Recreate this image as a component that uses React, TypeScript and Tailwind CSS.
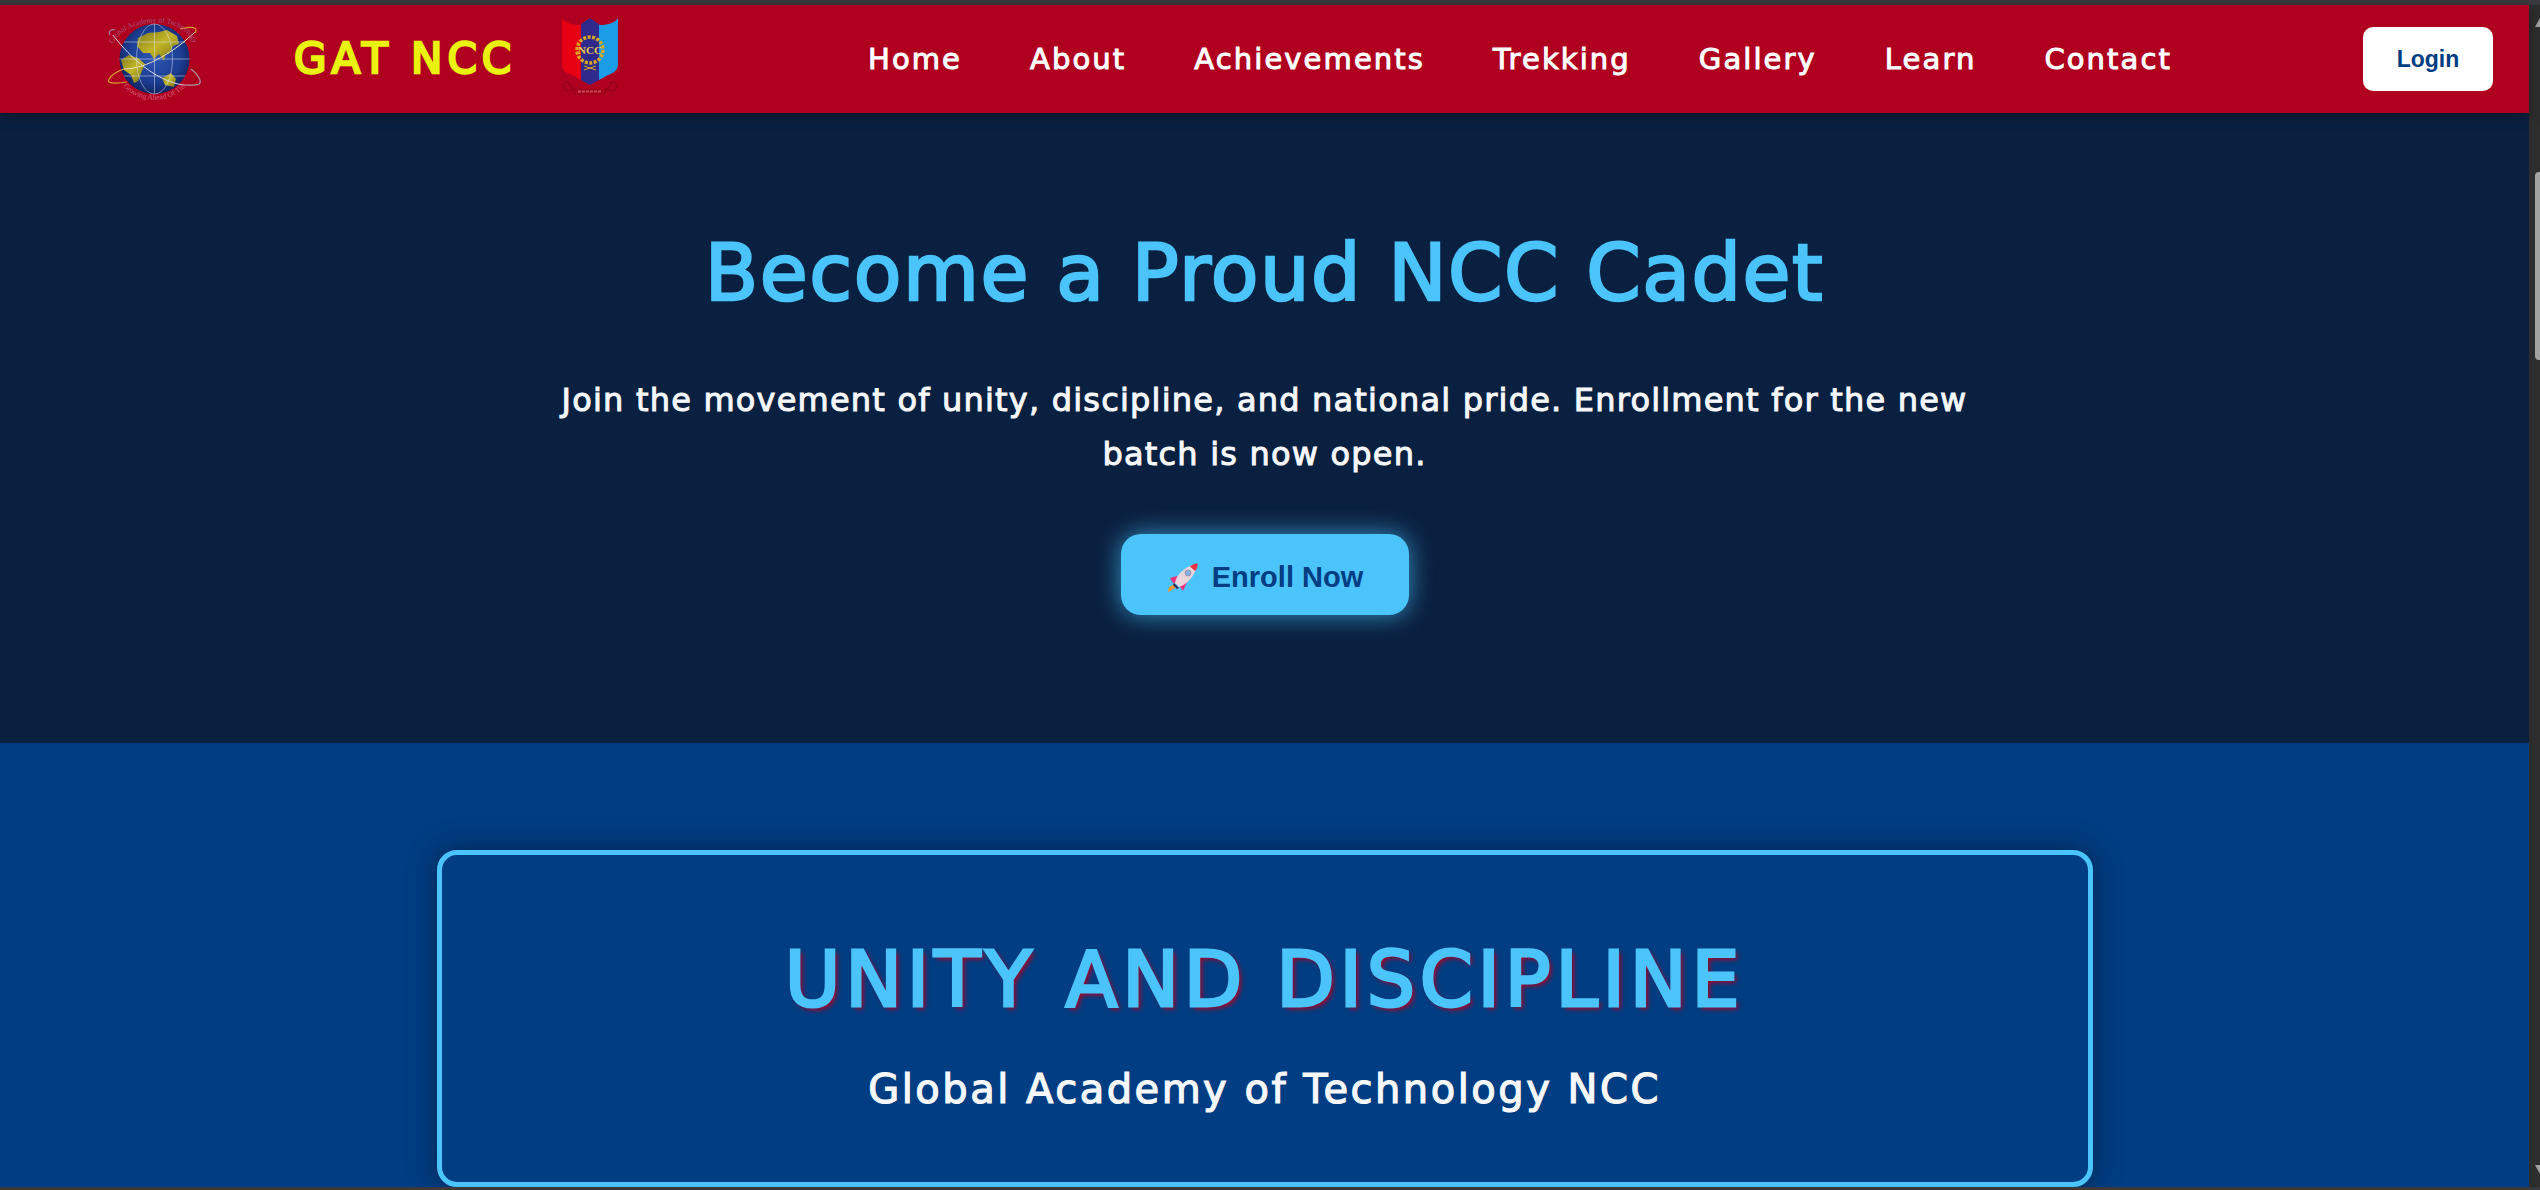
const NAV_LINKS = ["Home", "About", "Achievements", "Trekking", "Gallery", "Learn", "Contact"];

function GlobeLogo() {
  return (
    <svg viewBox="0 0 94 92" className="h-[92px] w-[94px] shrink-0" aria-hidden>
      <defs>
        <radialGradient id="sea" cx="50%" cy="45%" r="55%">
          <stop offset="0%" stopColor="#2c58b4" />
          <stop offset="70%" stopColor="#1c3c92" />
          <stop offset="100%" stopColor="#10245e" />
        </radialGradient>
        <linearGradient id="land" x1="0" y1="0" x2="1" y2="1">
          <stop offset="0%" stopColor="#7d7a1c" />
          <stop offset="50%" stopColor="#c4b526" />
          <stop offset="100%" stopColor="#6f6c1a" />
        </linearGradient>
        <path id="arcTop" d="M6 31 C16 8 70 -2 86 29" />
        <path id="arcBottom" d="M15 71 C28 92 66 92 80 71" />
      </defs>
      <circle cx="47.5" cy="46" r="35" fill="url(#sea)" />
      <path
        d="M31 25 L41 20 L52 19 L60 17 L70 23 L72 31 L66 33 L62 41 L59 40 L57 48 L52 41 L47 46 L43 40 L36 40 L30 33 Z"
        fill="url(#land)"
      />
      <path d="M14 47 L22 42 L31 45 L38 51 L35 58 L31 68 L27 70 L24 62 L17 57 Z" fill="url(#land)" />
      <path d="M55 65 L64 60 L69 66 L67 74 L58 72 Z" fill="url(#land)" />
      <g fill="none" stroke="#dfe6f5" strokeWidth="0.7" opacity="0.7">
        <ellipse cx="47.5" cy="46" rx="18" ry="35" />
        <path d="M47.5 11 V81 M12.5 46 H82.5 M17 29 H78 M17 63 H78" />
      </g>
      <path d="M17 56 C40 56 68 38 88 19" fill="none" stroke="#e8e2c0" strokeWidth="1" />
      <path d="M6 22 C24 46 50 68 76 72" fill="none" stroke="#d8d8e8" strokeWidth="1" />
      <path d="M3 22 C1 18 4 16 8 17" fill="none" stroke="#9a7fa0" strokeWidth="1.2" />
      <path d="M73 16 C84 13 92 14 88 20" fill="none" stroke="#d9a030" strokeWidth="1.2" />
      <path d="M17 56 C5 60 0 67 2 69 C6 71 14 70 20 69" fill="none" stroke="#d9a030" strokeWidth="1.2" />
      <path d="M84 56 C92 62 95 69 92 71 C88 73 82 72 76 72" fill="none" stroke="#a897a8" strokeWidth="1.2" />
      <text fill="#a2587e" fontSize="7.5" fontFamily="'Liberation Serif', serif">
        <textPath href="#arcTop">Global Academy of Technology</textPath>
      </text>
      <text fill="#d9607c" fontSize="7.5" fontFamily="'Liberation Serif', serif">
        <textPath href="#arcBottom" startOffset="3%">Growing Ahead Of Time</textPath>
      </text>
    </svg>
  );
}

function NccLogo() {
  return (
    <svg viewBox="0 0 56 82" className="ml-[46px] h-[82px] w-[56px] shrink-0" aria-hidden>
      <defs>
        <clipPath id="shield">
          <path d="M0 0 C4 6 12 7 18 7 L28 0 L38 7 C44 7 52 6 56 0 V46 C56 52 52 55 46 57 L28 67 L10 57 C4 55 0 52 0 46 Z" />
        </clipPath>
      </defs>
      <g clipPath="url(#shield)">
        <rect x="0" y="0" width="19" height="70" fill="#e60012" />
        <rect x="19" y="0" width="18" height="70" fill="#2f2a8c" />
        <rect x="37" y="0" width="19" height="70" fill="#1a9de6" />
      </g>
      <circle cx="28" cy="32" r="13" fill="none" stroke="#d9a820" strokeWidth="3.5" strokeDasharray="3 1.5" />
      <text x="28" y="36" textAnchor="middle" fill="#e8c84a" fontSize="11" fontWeight="700" fontFamily="'Liberation Serif', serif">
        NCC
      </text>
      <path d="M22 48 L34 52 M34 48 L22 52" stroke="#d9a820" strokeWidth="1" />
      <g fill="none" stroke="#8f0016" strokeWidth="1.2">
        <path d="M10 72 L6 73 C1 72 0 66 3 64 C6 63 9 66 8 69" />
        <path d="M46 72 L50 73 C55 72 56 66 53 64 C50 63 47 66 48 69" />
        <path d="M10 70 L14 76 H42 L46 70 L42 72 H14 Z" />
      </g>
      <path d="M16 73.5 H40" stroke="#c9485a" strokeWidth="2" strokeDasharray="3 1" />
    </svg>
  );
}

function RocketEmoji() {
  return (
    <svg viewBox="0 0 30 30" className="h-[30px] w-[30px] shrink-0" aria-hidden>
      <path d="M2 15 L9 13 L13 19 L5 20 Z" fill="#f0307a" />
      <path d="M19 19 L13 13 L10 21 L15 28 Z" fill="#f0307a" />
      <path d="M7 25 C4 27 2 28 0 29 C0 26 1 24 3 23 C5 21 8 23 7 25 Z" fill="#f59332" />
      <path d="M7 20 C8 12 17 4 25 2 L28 5 C27 13 18 22 11 24 Z" fill="#ead5dc" />
      <path d="M22 3.5 C25 1 28 0 29.5 0.5 C30 2 29 6 27 8 Z" fill="#f0303f" />
      <circle cx="20" cy="10" r="3" fill="#7fb2ea" stroke="#a88fa8" strokeWidth="1" />
      <path d="M6 20 L11 25 L9 26 L5 22 Z" fill="#3a2a50" />
    </svg>
  );
}

function Navbar() {
  return (
    <header className="relative z-10 flex h-[108px] shrink-0 items-center bg-[#b00020] pl-[107px] pr-[36px] shadow-[0_4px_12px_rgba(0,0,0,0.35)]">
      <GlobeLogo />
      <span className="ml-[93px] w-[222px] shrink-0 whitespace-nowrap text-[42px] leading-none tracking-[5px] text-[#eaf20f] [-webkit-text-stroke:2.5px_#eaf20f] [font-family:'DejaVu_Sans',sans-serif]">
        GAT NCC
      </span>
      <NccLogo />
      <nav className="ml-[250px] flex items-center gap-[68px]">
        {NAV_LINKS.map((label) => (
          <a
            key={label}
            className="whitespace-nowrap text-[29px] leading-none tracking-[2.1px] text-white [-webkit-text-stroke:1px_#ffffff] [font-family:'DejaVu_Sans',sans-serif]"
          >
            {label}
          </a>
        ))}
      </nav>
      <button
        type="button"
        className="ml-auto h-[64px] w-[130px] shrink-0 rounded-[10px] bg-white text-[23px] font-bold text-[#003d82] [font-family:'Liberation_Sans',sans-serif]"
      >
        Login
      </button>
    </header>
  );
}

function Hero() {
  return (
    <section className="flex h-[630px] shrink-0 flex-col items-center bg-[#0a2040] pt-[115px] [font-family:'DejaVu_Sans',sans-serif]">
      <h1 className="whitespace-nowrap text-[78px] leading-[90px] tracking-[1.5px] text-[#4ac4fa] [-webkit-text-stroke:2.5px_#4ac4fa]">
        Become a Proud NCC Cadet
      </h1>
      <p className="mt-[55px] w-[1440px] text-center text-[32px] leading-[54px] tracking-[1.2px] text-[#f5f7fa] [-webkit-text-stroke:1px_#f5f7fa]">
        Join the movement of unity, discipline, and national pride. Enrollment for the new batch is now open.
      </p>
      <button
        type="button"
        className="mt-[53px] flex h-[81px] w-[288px] items-center justify-center gap-[14px] rounded-[20px] bg-[#4ac4fa] pt-[6px] pl-[2px] text-[29px] font-bold text-[#003d82] shadow-[0_0_25px_rgba(74,196,250,0.7)] [font-family:'Liberation_Sans',sans-serif]"
      >
        <RocketEmoji />
        Enroll Now
      </button>
    </section>
  );
}

function MottoCard() {
  return (
    <section className="flex min-h-0 flex-1 justify-center bg-[#003d82] pt-[107px] [font-family:'DejaVu_Sans',sans-serif]">
      <div className="flex h-[337px] w-[1656px] flex-col items-center rounded-[20px] border-[5px] border-[#4ac4fa] bg-[#003d82] pt-[80px] shadow-[0_0_30px_rgba(0,0,0,0.4)]">
        <h2 className="whitespace-nowrap text-[76px] leading-[90px] tracking-[4.8px] text-[#4ac4fa] [-webkit-text-stroke:3px_#4ac4fa] [text-shadow:3px_3px_5px_#b00020]">
          UNITY AND DISCIPLINE
        </h2>
        <p className="mt-[39px] whitespace-nowrap text-[40px] leading-[50px] tracking-[2.5px] text-[#f5f7fa] [-webkit-text-stroke:1.2px_#f5f7fa]">
          Global Academy of Technology NCC
        </p>
      </div>
    </section>
  );
}

function Scrollbar() {
  return (
    <div className="flex w-[11px] shrink-0 flex-col items-start bg-[#2d2d2d] pl-[6px] pt-[13px] pb-[13px]">
      <svg viewBox="0 0 5 9" className="h-[9px] w-[5px] shrink-0" aria-hidden>
        <path d="M5 0 V9 H0 Z" fill="#a3a3a3" />
      </svg>
      <div className="mt-[145px] h-[188px] w-[5px] shrink-0 rounded-l-[4px] bg-[#a3a3a3]" />
      <svg viewBox="0 0 5 9" className="mt-auto h-[9px] w-[5px] shrink-0" aria-hidden>
        <path d="M5 9 V0 H0 Z" fill="#a3a3a3" />
      </svg>
    </div>
  );
}

export default function App() {
  return (
    <div className="flex h-[1190px] w-[2540px] flex-col overflow-hidden bg-[#3a3a3e]">
      <div className="mt-[5px] flex min-h-0 flex-1">
        <main className="flex min-w-0 flex-1 flex-col">
          <Navbar />
          <Hero />
          <MottoCard />
        </main>
        <Scrollbar />
      </div>
      <div className="h-[3px] shrink-0 bg-[#3a3a3e]" />
    </div>
  );
}
